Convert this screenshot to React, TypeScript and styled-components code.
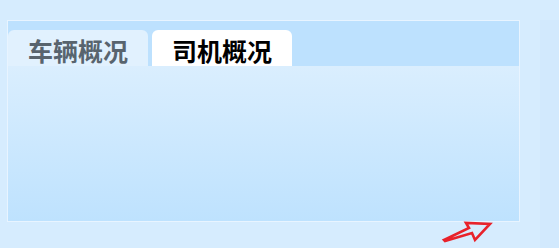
import * as React from 'react';
import styled, { createGlobalStyle } from 'styled-components';

const GlobalStyle = createGlobalStyle`
  html, body {
    margin: 0;
    padding: 0;
    background: #d6ecfe;
    font-family: 'Noto Sans CJK SC', 'Noto Sans', sans-serif;
  }
`;

const tabs = ['车辆概况', '司机概况'];

export default function App() {
  const [active, setActive] = React.useState(1);

  return (
    <>
      <GlobalStyle />
      <Page>
        <Panel>
          <TabBar>
            {tabs.map((label, i) => (
              <Tab key={label} $active={i === active} onClick={() => setActive(i)}>
                {label}
              </Tab>
            ))}
          </TabBar>
          <Content />
        </Panel>
        <SideStrip />
        <Arrow viewBox="0 0 50 22" aria-hidden>
          <polygon
            points="1,19 26,7 23,2 47,3 32,19 29,12 2,20"
            fill="none"
            stroke="#e8222b"
            strokeWidth="2.6"
            strokeLinejoin="miter"
          />
        </Arrow>
      </Page>
    </>
  );
}

const Page = styled.div`
  position: relative;
  display: flex;
  height: 248px;
  padding: 20px 0 0 7px;
  box-sizing: border-box;
  overflow: hidden;
`;

const Panel = styled.div`
  display: flex;
  flex-direction: column;
  width: 513px;
  height: 202px;
  box-sizing: border-box;
  border: 1px solid #e8f4ff;
  flex-shrink: 0;
`;

const TabBar = styled.div`
  display: flex;
  align-items: flex-end;
  gap: 4px;
  height: 45px;
  background: #bde1fe;
`;

const Tab = styled.div<{ $active: boolean }>`
  width: 140px;
  height: 36px;
  display: flex;
  align-items: center;
  justify-content: center;
  border-radius: 6px 6px 0 0;
  background: ${(p) => (p.$active ? '#ffffff' : '#e1f1fe')};
  color: ${(p) => (p.$active ? '#000000' : '#58646e')};
  font-size: 25px;
  font-weight: 700;
  cursor: pointer;
  padding-top: 3px;
  box-sizing: border-box;
`;

const Content = styled.div`
  flex: 1;
  background: linear-gradient(to bottom, #daeefe, #bee2fe);
`;

const SideStrip = styled.div`
  flex: 1;
  margin-left: 20px;
  background: #d2e9fd;
`;

const Arrow = styled.svg`
  position: absolute;
  left: 443px;
  top: 221px;
  width: 50px;
  height: 22px;
  overflow: visible;
`;
